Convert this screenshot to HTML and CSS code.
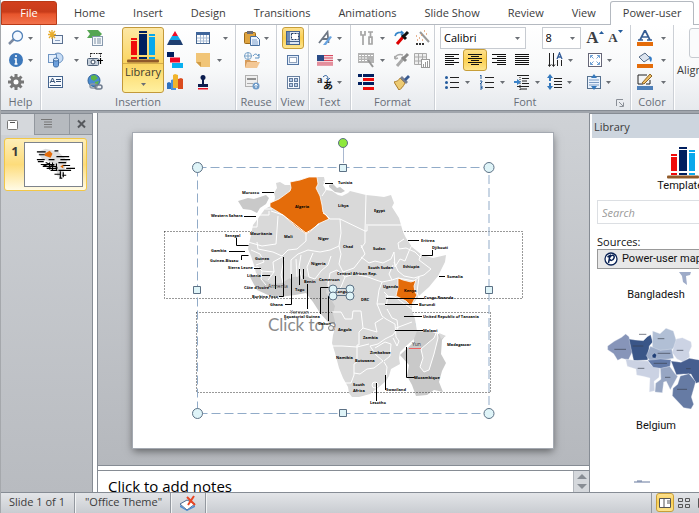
FILE: index.html
```html
<!DOCTYPE html>
<html lang="en">
<head>
<meta charset="utf-8">
<title>Presentation editor</title>
<link rel="stylesheet" href="styles.css">
</head>
<body>
<svg class="defs" aria-hidden="true">
  <symbol id="caret" viewBox="0 0 5 3"><path d="M0 0h5L2.500 3z" fill="#6b6f75"/></symbol>
  <symbol id="search" viewBox="0 0 16 16"><path d="M6 9L1 14" stroke="#7c8aa0" stroke-width="2.500"/><circle cx="9.500" cy="6" r="5" fill="#f4f9ff" stroke="#5382b8" stroke-width="1.300"/></symbol>
  <symbol id="info" viewBox="0 0 16 16"><circle cx="8" cy="8" r="7" fill="#3d78bb"/><path d="M8 3v2M6.500 7H8v4.500M6.500 12h3" stroke="#fff" stroke-width="1.600" fill="none"/></symbol>
  <symbol id="gear" viewBox="0 0 16 16"><g stroke="#777" stroke-width="3"><path d="M8 0v16M0 8h16M2.500 2.500l11 11M13.500 2.500l-11 11"/></g><circle cx="8" cy="8" r="5.500" fill="#777"/><circle cx="8" cy="8" r="2.500" fill="#fff"/></symbol>
  <symbol id="newslide" viewBox="0 0 16 16"><rect x="4.500" y="5.500" width="10" height="8" fill="#eef4fc" stroke="#5b7090"/><path d="M7 10.500h5" stroke="#8aa0c0"/><path d="M4 0v9M0 4.500h8M1 1l6 7M7 1L1 8" stroke="#e8ad2c" stroke-width="1.300"/></symbol>
  <symbol id="shapes" viewBox="0 0 16 16"><circle cx="10" cy="6" r="5" fill="#c6dcf5" stroke="#6e94c2"/><rect x=".5" y="2.500" width="8" height="8" fill="#e4effc" stroke="#6e94c2"/><path d="M5.500 7.500v6c0 2 5 2 5 0v-6z" fill="#6da0dc" stroke="#3f6ea6"/><ellipse cx="8" cy="7.500" rx="2.500" ry="1.500" fill="#d7e8fa" stroke="#3f6ea6"/></symbol>
  <symbol id="textbox" viewBox="0 0 16 16"><rect x=".5" y="2.500" width="14" height="11" fill="#f8fbff" stroke="#45658f"/><path d="M2 9l2.500-5L7 9M3 7.500h3M8 5.500h5M8 7.500h5M2 11.500h11" stroke="#355277" fill="none"/></symbol>
  <symbol id="flow" viewBox="0 0 16 16"><path d="M0 0h11l4 4-4 4H0l3-4z" fill="#55a552"/><rect x="5.500" y="6.500" width="10" height="9" fill="#f6f9fc" stroke="#8799ad"/><path d="M7 9h2m1 0h4M7 11h2m1 0h4M7 13h2m1 0h4" stroke="#7d8fa3"/></symbol>
  <symbol id="shot" viewBox="0 0 16 16"><path d="M4 1.500h11M3.500 1v5M13.500 1v6" stroke="#222" stroke-dasharray="1.500 1" fill="none"/><rect x=".5" y="6.500" width="11" height="7" rx="1" fill="#c5cfdb" stroke="#4e6077"/><circle cx="6" cy="10" r="2" fill="#fff" stroke="#35465c"/><path d="M10 8.500h6M13.500 6v6" stroke="#000" stroke-width="1.200"/></symbol>
  <symbol id="globe" viewBox="0 0 16 16"><circle cx="7" cy="6.500" r="6" fill="#498bd0" stroke="#2f6297"/><path d="M4 2l4-1 3 3-4 3-3-2zM8 8l4-1-2 5-2-1z" fill="#5cb645"/><rect x="3" y="10" width="7" height="4" rx="2" fill="none" stroke="#8b97a6" stroke-width="1.500"/><rect x="8" y="11" width="7" height="4" rx="2" fill="none" stroke="#6e7b8d" stroke-width="1.500"/></symbol>
  <symbol id="books" viewBox="0 0 34 34"><g fill="#f00c0c"><rect x="5" y="9" width="6" height="2"/><rect x="5" y="12" width="6" height="14"/><rect x="5" y="28" width="6" height="2"/></g><g fill="#001f5f"><rect x="13" y="2" width="8" height="2"/><rect x="13" y="5" width="8" height="21"/><rect x="13" y="28" width="8" height="2"/></g><g fill="#08a8ec"><rect x="23" y="5" width="6" height="2"/><rect x="23" y="8" width="6" height="18"/><rect x="23" y="28" width="6" height="2"/></g><rect x="1" y="30.500" width="32" height="3" rx="1" fill="#915a29"/></symbol>
  <symbol id="pyramid" viewBox="0 0 16 16"><path d="M8 1l3 5H5z" fill="#f00c28"/><path d="M5 6h6l2.500 4h-11z" fill="#14a6e8"/><path d="M2.500 10h11l2.500 5H0z" fill="#1e3e70"/></symbol>
  <symbol id="gantt" viewBox="0 0 16 16"><path d="M0 0h7v5H0z" fill="#001f5f"/><path d="M3 5.500h10v5H3z" fill="#f00c28"/><path d="M5 11h11v5H5z" fill="#08b0f0"/></symbol>
  <symbol id="charts" viewBox="0 0 16 16"><path d="M0 9l2-1 2 1v6H0z" fill="#2f71bd"/><path d="M4 6l3-1 2 1v10H4z" fill="#4b91da"/><path d="M6 1l2-1 3 1v13H6z" fill="#f0b32c"/><path d="M11 5l3-1 2 1v10h-5z" fill="#da4b1e"/></symbol>
  <symbol id="table" viewBox="0 0 16 16"><rect x="1.500" y="2.500" width="13" height="11" fill="#fff" stroke="#45658f"/><path d="M1 2h14v3H1z" fill="#40669b"/><path d="M2 8h12M2 11h12M5.500 5v8M8.500 5v8M11.500 5v8" stroke="#a9bdd6"/></symbol>
  <symbol id="note" viewBox="0 0 16 16"><path d="M1 1h14v14H6l-5-5z" fill="#f1c578"/><path d="M1 10h5v5z" fill="#cf9b46"/></symbol>
  <symbol id="stamp" viewBox="0 0 16 16"><circle cx="8" cy="3.500" r="2.500" fill="#0b1d4f"/><path d="M7 5h2v5h4v3H3v-3h4z" fill="#0b1d4f"/><path d="M3 14h10v1.500H3z" fill="#e81224"/></symbol>
  <symbol id="paste" viewBox="0 0 16 16"><rect x=".5" y="2.500" width="11" height="11" rx="1" fill="#dfa440" stroke="#9c6a1a"/><rect x="3" y="1" width="6" height="3" fill="#6c6c76"/><path d="M6.500 6.500h6l3 3v6h-9z" fill="#eef4ff" stroke="#466e9f"/><path d="M8 10h5M8 12h6M8 14h6" stroke="#7da0ca"/></symbol>
  <symbol id="folder" viewBox="0 0 16 16"><circle cx="4" cy="4" r="3.500" fill="none" stroke="#7ba3c8"/><path d="M0 4h8M4 0v8" stroke="#7ba3c8"/><path d="M9 4c2-3 4-2 5 0l1-2v4h-4" fill="none" stroke="#5b8fbf"/><path d="M1 8h5l1 1h6v6H1z" fill="#d69b5b"/><path d="M3 10h13l-3 6H1z" fill="#f3c795"/></symbol>
  <symbol id="publish" viewBox="0 0 16 16"><rect x="1.500" y="1.500" width="12" height="11" fill="#efefef" stroke="#b0b0b0"/><path d="M3 4h9v2H3z" fill="#909090"/><path d="M3 9.500h6" stroke="#aaa"/><circle cx="12" cy="12" r="3.500" fill="#6f9bc8"/><path d="M12 14v-4M10.500 11.500L12 10l1.500 1.500" stroke="#fff" fill="none"/></symbol>
  <symbol id="guide" viewBox="0 0 16 16"><rect x="1.500" y="1.500" width="13" height="13" fill="#dde7f4" stroke="#46638c"/><path d="M2 2h3v12H2z" fill="#6f8cb5"/><path d="M2 11.500h12" stroke="#46638c"/><rect x="6.500" y="3.500" width="7" height="6" fill="#fff" stroke="#223b60" stroke-dasharray="2 1"/></symbol>
  <symbol id="fitview" viewBox="0 0 16 16"><rect x="2.500" y="3.500" width="11" height="9" fill="#e2edfa" stroke="#5475a2"/><rect x="4.500" y="5.500" width="7" height="5" fill="#fff" stroke="#33517b" stroke-dasharray="1 1"/></symbol>
  <symbol id="sorter" viewBox="0 0 16 16"><rect x="2.500" y="2.500" width="12" height="12" fill="#f5f9ff" stroke="#667f9f"/><g fill="#b8cce7" stroke="#637c9d"><rect x="4.500" y="4.500" width="3" height="3"/><rect x="9.500" y="4.500" width="3" height="3"/><rect x="4.500" y="9.500" width="3" height="3"/><rect x="9.500" y="9.500" width="3" height="3"/></g></symbol>
  <symbol id="fontstyle" viewBox="0 0 16 16"><path d="M2 13L10.500 2l1 11M5 9h6" stroke="#6e7784" stroke-width="1.800" fill="none"/><path d="M6 15l7-9 2 1-6 8z" fill="#69a3df"/></symbol>
  <symbol id="flag" viewBox="0 0 16 16"><path d="M0 3h16v10H0z" fill="#f3d5da"/><path d="M0 3.500h16M0 6h16M0 8.500h16M0 11h16M0 13h16" stroke="#d64b60" stroke-width="1.200"/><path d="M0 3h7v6H0z" fill="#294b86"/></symbol>
  <symbol id="translate" viewBox="0 0 16 16"><text x="0" y="9" class="glyph-a">a</text><text x="6" y="15" class="glyph-jp">あ</text><path d="M6 3c3-3 5-1 5 2M9.500 4L11 6l2-2" stroke="#35659f" fill="none"/></symbol>
  <symbol id="tools" viewBox="0 0 16 16"><path d="M3 1v4h4V1M5 5v10M10 2h5M12.500 2v6M11 7v7h3V7z" stroke="#a5a5a5" stroke-width="1.700" fill="none"/></symbol>
  <symbol id="keyb" viewBox="0 0 16 16"><path d="M0 1h16v10H0z" fill="#b3b3b3"/><path d="M1 3.500h14M1 6h9M1 8.500h8" stroke="#fff" stroke-dasharray="2 1"/><path d="M10 8l5 7" stroke="#969696" stroke-width="2"/></symbol>
  <symbol id="rows" viewBox="0 0 16 16"><path d="M0 0h4v3H0zM5 0h11v3H5zM0 8h4v3H0zM5 8h11v3H5z" fill="#001f5f"/><path d="M5 4h11v3H5zM5 13h11v3H5z" fill="#f00c0c"/></symbol>
  <symbol id="dropper" viewBox="0 0 16 16"><path d="M3 14l6-7" stroke="#d00" stroke-width="3"/><path d="M8 5l4 4M10 6l4-4" stroke="#111" stroke-width="3"/><path d="M1 6c1-4 5-4 8-3M7 1l2 2-2 2" stroke="#3385ca" stroke-width="1.600" fill="none"/></symbol>
  <symbol id="dropper2" viewBox="0 0 16 16"><path d="M3 14l6-7" stroke="#aaa" stroke-width="3"/><path d="M8 5l4 4M10 6l4-4" stroke="#888" stroke-width="3"/><path d="M1 7c0-4 4-5 8-4M1 7L0 4m1 3l3-1" stroke="#aaa" stroke-width="1.500" fill="none"/></symbol>
  <symbol id="wand" viewBox="0 0 16 16"><path d="M6 2l9 10" stroke="#999" stroke-width="2"/><path d="M2 6h1M5 8h1M3 10h1M7 5h1M8 10h1M12 4h1M10 1h1" stroke="#df9b6c" stroke-width="1.500"/><path d="M2 14h8" stroke="#333" stroke-width="2" stroke-dasharray="2 1"/></symbol>
  <symbol id="chartgray" viewBox="0 0 16 16"><path d="M.5 1.500h12v11H.5zM1 5h12M1 9h12M4.500 2v10M8.500 2v10" fill="#eee" stroke="#aaa"/><rect x="7.500" y="7.500" width="8" height="8" fill="#fff" stroke="#999"/><path d="M9.500 15v-3M11.500 15v-5M13.500 15v-6" stroke="#999"/></symbol>
  <symbol id="brush" viewBox="0 0 16 16"><path d="M0 8c4-1 5-2 6-4l5 5c-2 4-4 6-6 7z" fill="#edcb73" stroke="#aa7c2b"/><path d="M6 4l2-2 6 6-2 2z" fill="#777f91"/><path d="M10 5l4-4 2 2-4 4z" fill="#375a91"/></symbol>
  <symbol id="left" viewBox="0 0 16 16"><path d="M1 2.500h14M1 4.500h9M1 6.500h14M1 8.500h9M1 10.500h14M1 12.500h9" stroke="#111"/></symbol>
  <symbol id="center" viewBox="0 0 16 16"><path d="M1 2.500h14M4 4.500h8M1 6.500h14M4 8.500h8M1 10.500h14M4 12.500h8" stroke="#111"/></symbol>
  <symbol id="right" viewBox="0 0 16 16"><path d="M1 2.500h14M6 4.500h9M1 6.500h14M6 8.500h9M1 10.500h14M6 12.500h9" stroke="#111"/></symbol>
  <symbol id="justify" viewBox="0 0 16 16"><path d="M1 2.500h14M1 4.500h14M1 6.500h14M1 8.500h14M1 10.500h14M1 12.500h14" stroke="#111"/></symbol>
  <symbol id="textdir" viewBox="0 0 16 16"><path d="M1.500 1v13M5.500 1v13M9.500 8v6M13.500 8v6M0 12.500l1.500 2 1.500-2M4 12.500l1.500 2 1.500-2" stroke="#222" fill="none"/><path d="M9 7l2.500-6L14 7M10 5h3" stroke="#345d99" stroke-width="1.300" fill="none"/></symbol>
  <symbol id="frame" viewBox="0 0 16 16"><rect x="1.500" y="1.500" width="13" height="13" fill="#fff" stroke="#667"/><path d="M3.500 6V3.500H6M10 3.500h2.500V6M12.500 10v2.500H10M6 12.500H3.500V10M3.500 3.500l3 3M12.500 3.500l-3 3M12.500 12.500l-3-3M3.500 12.500l3-3" stroke="#6ea0d4" fill="none"/></symbol>
  <symbol id="bullets" viewBox="0 0 16 16"><path d="M6 3.500h9M6 8.500h9M6 13.500h9" stroke="#222"/><g fill="#245c9d"><circle cx="2.500" cy="3.500" r="1.500"/><circle cx="2.500" cy="8.500" r="1.500"/><circle cx="2.500" cy="13.500" r="1.500"/></g></symbol>
  <symbol id="numbers" viewBox="0 0 16 16"><path d="M6 3.500h9M6 8.500h9M6 13.500h9" stroke="#222"/><path d="M1 2l1-1v4M1 7h2v1L1 10h2M1 12h2v3H1M1.500 13.500H3" stroke="#245c9d" fill="none"/></symbol>
  <symbol id="indent" viewBox="0 0 16 16"><path d="M3 1.500h12M8 4.500h7M8 7h5M8 9.500h7M3 12.500h12M6 15h7" stroke="#222"/><path d="M6 1v15" stroke="#222" stroke-dasharray="1 1"/><path d="M0 7h3V5l4 3-4 3V9H0z" fill="#3a82c8"/></symbol>
  <symbol id="spacing" viewBox="0 0 16 16"><path d="M7 4.500h8M7 7.500h8M7 10.500h8M7 13.500h8" stroke="#222"/><path d="M3 0l3 4H4v3H2V4H0zM3 16l3-4H4V9H2v3H0z" fill="#3478bc"/></symbol>
  <symbol id="vertical" viewBox="0 0 16 16"><rect x="1.500" y="2.500" width="13" height="12" fill="#e9f2fc" stroke="#56718f"/><path d="M3 6h10M3 8.500h10M3 11h10" stroke="#7b9bc3"/><path d="M8 0l3 4H5zM8 16l3-4H5z" fill="#3478bc"/></symbol>
  <symbol id="fontcolor" viewBox="0 0 16 16"><path d="M3 10L8 0l5 10M5 7h6M1 10h5M10 10h5" stroke="#365d94" stroke-width="1.700" fill="none"/><path d="M0 12h16v4H0z" fill="#e46c0a"/></symbol>
  <symbol id="fill" viewBox="0 0 16 16"><path d="M2 5l6-4 5 5-6 4z" fill="#dce4ef" stroke="#586d88"/><path d="M12 4c4 1 3 4 2 6-2-1-1-4-2-6" fill="#337bc5"/><path d="M0 12h16v4H0z" fill="#e46c0a"/></symbol>
  <symbol id="outline" viewBox="0 0 16 16"><path d="M1 1h9M1 1v9h5M13 6v4H9" stroke="#222" fill="none"/><path d="M5 9L13 0l2 2-8 8z" fill="#edbd64" stroke="#8d6527"/><path d="M0 12h16v4H0z" fill="#4d7fb8"/></symbol>
</svg>

<nav class="tabs">
  <button class="file">File</button>
  <a href="#home">Home</a><a href="#insert">Insert</a><a href="#design">Design</a><a href="#transitions">Transitions</a><a href="#animations">Animations</a><a href="#show">Slide Show</a><a href="#review">Review</a><a href="#view">View</a><a href="#power" class="active">Power-user</a>
</nav>

<section class="ribbon">
  <div class="group help">
    <div class="stack">
      <button class="tool" aria-label="Search"><svg class="i"><use href="#search"/></svg><svg class="c"><use href="#caret"/></svg></button>
      <button class="tool" aria-label="Info"><svg class="i"><use href="#info"/></svg><svg class="c"><use href="#caret"/></svg></button>
      <button class="tool" aria-label="Settings"><svg class="i"><use href="#gear"/></svg></button>
    </div><h2>Help</h2>
  </div>
  <div class="group insertion">
    <div class="cols">
      <div class="stack wide">
        <button class="tool" aria-label="New slide"><svg class="i"><use href="#newslide"/></svg><svg class="c"><use href="#caret"/></svg></button>
        <button class="tool" aria-label="Shapes"><svg class="i"><use href="#shapes"/></svg><svg class="c"><use href="#caret"/></svg></button>
        <button class="tool" aria-label="Text box"><svg class="i"><use href="#textbox"/></svg></button>
      </div>
      <div class="stack">
        <button class="tool" aria-label="Process"><svg class="i"><use href="#flow"/></svg></button>
        <button class="tool" aria-label="Screenshot"><svg class="i"><use href="#shot"/></svg></button>
        <button class="tool" aria-label="Hyperlink"><svg class="i"><use href="#globe"/></svg></button>
      </div>
      <button class="library"><svg class="big"><use href="#books"/></svg><span>Library</span><svg class="c"><use href="#caret"/></svg></button>
      <div class="stack">
        <button class="tool" aria-label="Pyramid"><svg class="i"><use href="#pyramid"/></svg></button>
        <button class="tool" aria-label="Gantt"><svg class="i"><use href="#gantt"/></svg></button>
        <button class="tool" aria-label="Chart"><svg class="i"><use href="#charts"/></svg></button>
      </div>
      <div class="stack last">
        <button class="tool" aria-label="Table"><svg class="i"><use href="#table"/></svg><svg class="c"><use href="#caret"/></svg></button>
        <button class="tool" aria-label="Note"><svg class="i"><use href="#note"/></svg><svg class="c"><use href="#caret"/></svg></button>
        <button class="tool" aria-label="Stamp"><svg class="i"><use href="#stamp"/></svg></button>
      </div>
    </div><h2>Insertion</h2>
  </div>
  <div class="group reuse">
    <div class="stack">
      <button class="tool" aria-label="Paste"><svg class="i"><use href="#paste"/></svg><svg class="c"><use href="#caret"/></svg></button>
      <button class="tool" aria-label="Open"><svg class="i"><use href="#folder"/></svg></button>
      <button class="tool" aria-label="Publish"><svg class="i"><use href="#publish"/></svg></button>
    </div><h2>Reuse</h2>
  </div>
  <div class="group view">
    <div class="stack">
      <button class="tool on" aria-label="Normal"><svg class="i"><use href="#guide"/></svg></button>
      <button class="tool" aria-label="Fit"><svg class="i"><use href="#fitview"/></svg></button>
      <button class="tool" aria-label="Sorter"><svg class="i"><use href="#sorter"/></svg></button>
    </div><h2>View</h2>
  </div>
  <div class="group text">
    <div class="stack">
      <button class="tool" aria-label="Font style"><svg class="i"><use href="#fontstyle"/></svg><svg class="c"><use href="#caret"/></svg></button>
      <button class="tool" aria-label="Language"><svg class="i"><use href="#flag"/></svg><svg class="c"><use href="#caret"/></svg></button>
      <button class="tool" aria-label="Translate"><svg class="i"><use href="#translate"/></svg><svg class="c"><use href="#caret"/></svg></button>
    </div><h2>Text</h2>
  </div>
  <div class="group format">
    <div class="cols">
      <div class="stack first">
        <button class="tool" aria-label="Tools"><svg class="i"><use href="#tools"/></svg><svg class="c"><use href="#caret"/></svg></button>
        <button class="tool" aria-label="Format grid"><svg class="i"><use href="#keyb"/></svg><svg class="c"><use href="#caret"/></svg></button>
        <button class="tool" aria-label="Row colors"><svg class="i"><use href="#rows"/></svg></button>
      </div>
      <div class="stack">
        <button class="tool" aria-label="Pick color"><svg class="i"><use href="#dropper"/></svg></button>
        <button class="tool" aria-label="Apply color"><svg class="i"><use href="#dropper2"/></svg></button>
        <button class="tool" aria-label="Format painter"><svg class="i"><use href="#brush"/></svg></button>
      </div>
      <div class="stack">
        <button class="tool" aria-label="Wand"><svg class="i"><use href="#wand"/></svg></button>
        <button class="tool" aria-label="Chart format"><svg class="i"><use href="#chartgray"/></svg></button>
      </div>
    </div><h2>Format</h2>
  </div>
  <div class="group font">
    <div class="line">
      <label class="pick family"><select aria-label="Font"><option>Calibri</option></select><svg class="c"><use href="#caret"/></svg></label>
      <label class="pick size"><select aria-label="Font size"><option>8</option></select><svg class="c"><use href="#caret"/></svg></label>
      <button class="grow" aria-label="Grow font">A<svg class="c up" viewBox="0 0 5 3"><path d="M0 3h5L2.500 0z" fill="#245c9d"/></svg></button>
      <button class="grow small" aria-label="Shrink font">A<svg class="c" viewBox="0 0 5 3"><path d="M0 0h5L2.500 3z" fill="#245c9d"/></svg></button>
    </div>
    <div class="line aligns">
      <button class="tool" aria-label="Left"><svg class="i"><use href="#left"/></svg></button>
      <button class="tool on" aria-label="Center"><svg class="i"><use href="#center"/></svg></button>
      <button class="tool" aria-label="Right"><svg class="i"><use href="#right"/></svg></button>
      <button class="tool" aria-label="Justify"><svg class="i"><use href="#justify"/></svg></button>
      <button class="tool pair" aria-label="Direction"><svg class="i"><use href="#textdir"/></svg><svg class="c"><use href="#caret"/></svg></button>
      <button class="tool pair" aria-label="Autofit"><svg class="i"><use href="#frame"/></svg><svg class="c"><use href="#caret"/></svg></button>
    </div>
    <div class="line lists">
      <button class="tool" aria-label="Bullets"><svg class="i"><use href="#bullets"/></svg><svg class="c"><use href="#caret"/></svg></button>
      <button class="tool" aria-label="Numbering"><svg class="i"><use href="#numbers"/></svg><svg class="c"><use href="#caret"/></svg></button>
      <button class="tool" aria-label="Indent"><svg class="i"><use href="#indent"/></svg><svg class="c"><use href="#caret"/></svg></button>
      <button class="tool pair" aria-label="Spacing"><svg class="i"><use href="#spacing"/></svg><svg class="c"><use href="#caret"/></svg></button>
      <button class="tool pair" aria-label="Vertical"><svg class="i"><use href="#vertical"/></svg><svg class="c"><use href="#caret"/></svg></button>
    </div>
    <h2>Font</h2>
    <svg class="launcher" viewBox="0 0 8 8"><path d="M.5 7V.5H7M3 3l4 4M7.500 3.500v4h-4" fill="none" stroke="#8a8f97"/></svg>
  </div>
  <div class="group color">
    <div class="stack">
      <button class="tool" aria-label="Font color"><svg class="i"><use href="#fontcolor"/></svg><svg class="c"><use href="#caret"/></svg></button>
      <button class="tool" aria-label="Fill color"><svg class="i"><use href="#fill"/></svg><svg class="c"><use href="#caret"/></svg></button>
      <button class="tool" aria-label="Outline color"><svg class="i"><use href="#outline"/></svg><svg class="c"><use href="#caret"/></svg></button>
    </div><h2>Color</h2>
  </div>
  <div class="group align">
    <button class="alignbtn"><i></i><span>Align</span></button>
  </div>
</section>

<main class="work">
  <aside class="slides">
    <div class="panetabs">
      <button class="cur" aria-label="Slides"><svg viewBox="0 0 11 10"><rect x=".5" y=".5" width="10" height="9" rx="1" fill="#fff" stroke="#777"/><path d="M3 2.500h5" stroke="#555"/></svg></button>
      <button aria-label="Outline"><svg viewBox="0 0 11 10"><path d="M0 .5h11M3 3h8M3 5.500h8M3 8h8" stroke="#777"/></svg></button>
      <button class="x" aria-label="Close"><svg viewBox="0 0 11 10"><path d="M2 1.500l7 7M9 1.500l-7 7" stroke="#55585d" stroke-width="2"/></svg></button>
    </div>
    <button class="thumb"><b>1</b>
      <svg viewBox="0 0 58 44"><path d="M13 9l8-3 13 3 9 9-5 17-5-1-2-12-14-6z" fill="#dedede"/><path d="M20 11l5-3 3 3-2 4-6-2z" fill="#e46c0a"/><g stroke="#000" stroke-width="1.200"><path d="M12 9h9M30 8h4M14 12h6M32 14h13M12 17h8M36 17h10M13 19h6M24 17h6M34 20h8M16 22h14M38 23h8M18 24h12M22 26h11M42 26h9M26 28h7M34 28h13M30 32h6M38 33h4M35 36h3M25 20v7M28 20v8M32 21v7M36 29v7M39 30v5M21 20l12 5M18 22l8 3"/></g><path d="M36 24l3-2v4z" fill="#e46c0a"/></svg>
    </button>
  </aside>
  <div class="stage">
    <div class="canvas">
      <div class="slide">
        <svg class="drawing" viewBox="133 132 420 315">
          <g fill="#c9c9c9">
            <path d="M238 200l10-3 6 1 12-4 3 3-3 6-6 4-3 5-6-3-8-1z"/>
            <path d="M250 276l7 13 11 5 12 2 15-2 11-2 7 9 7 11 9 10 6 2v-40l-35-14z"/>
            <path d="M329 184l4-1 4 4 3-1 5 4-4 2-6-1-6-5z"/>
            <path d="M412 321l4 9 16 1 13 4-3 4-1 14 5 9-4 8-3 11 4 10-9-2-7 5-11 1-4-11-5-9 2-11-9-10 14-13z"/>
          </g>
          <text x="268" y="330" class="prompt">Click to add subtitle</text>
          <g class="dotted"><path d="M164.500 230.500h358v67h-358z"/><path d="M196.500 311.500h294v80h-294z"/></g>
          <g fill="#d9d9d9">
            <path d="M276 182l4-1 5 3 5 0 2-3 8-2 10-3 7 0 7 0 1 5-2 3 3 5 6 1 6 4 4 1 6-3 2-2 8 2 8 2 10 1 8 1 7-2 3 8-2 4 7 11 4 14 3 6 6 9 10 8 11 3 13-3-1 7-7 14-9 11-9 8-4 5-4 5v6l3 8 2 12-3 8-8 7-6 6-1 6 1 6-9 5-2 7-3 5-7 6-9 7-11 3h-7l-3-4-1-6-5-9-4-10-4-15-3-10 1-8 3-10-3-11 2-8-5-8-4-5 1-11-7-3-10-1-8-3-12 3-8 5-10 1-10-5-6-6-2-8-3-9-3-7 3-14 2-10 6-8 6-8 9-5 1-7-1-4 3-5z"/>
            <path d="M437 330l1 7-4 16-5 16-5 2-4-5 3-9-2-9 7-6 6-5z" stroke="#fff"/><path d="M439 332l7 3-5 3z"/>
          </g>
          <g fill="#e46c0a" stroke="#fff" stroke-width=".8">
            <path d="M290 181l10-2 9-3h8l1 7-2 4 4 8 2 9 1 7 3 3 3 4-11 5-7 7-5 3-11-8-12-11-13-8v-4l9-4 11-8 1-3z"/>
            <path d="M398 277l5 2 8 2 5-2-2 6 1 6 2 3-3 5-3 6-5-5-10-5 2-9z"/>
          </g>
          <g class="borders">
            <path d="M265 208h7M249 226h8l1-12h11v-4M271 210l12 4 23 18v8l-9 8-9 1-6 6-9-4-15-3-1-7M278 215l-2 28-14 2-14-4M323 212l3 2 4 4h10l25 12 1-36M324 180l2 9-4 6M368 224h33M365 230l2 0v-7M306 232l5-3 8-6M340 218l1 14-2 13-9 4-10 2-12-2-10 4-7 6v19M361 247l4-5v-12M339 245l2 8-2 10 4 8 11-4 7-9 4-5-4-9M361 256l8 6 6-2 8 2 8-4 3-7 1 15 5-8 5 2 4-10 4-8M404 238l-6 4 1 6 7-1 9 4 6 6M421 253l-2 6 12 9-7 6-10 3-10-2-6-5-4-9M393 264l-4 9 3 6 6-2 16 3 5-4-2 15 2 6M392 279l-10 2-3 8-2 14 5 12 4 3M382 281l-6-2-8-3-14-3-9 3-4 10-7 8-6 5M345 276l-8-7-7 3-2 12 7 10M313 252l-6 14 2 10 6 2 6-8 7-6 3-9M301 254l-2 12 3 12M296 258l1 18M284 258l-3 16 2 8M282 256l-9 5 1 10-6 8M274 271l-12-1-4-4-9 2M262 270l-1 8 5 6M251 249l9 4 4 8-8 3M332 311h9l4 7h7l1-8h8l2 17-4 4v13M330 345h12l15 1 12-3M359 344h-2v17l-3 2v11l-3 8h-6l-4-2M354 372l6 1 7-5 7-1 9-7-7-6-6-9 8-2 7-5 8-4 5-7-1-8-5-2-5-9M363 327l14 4-2-9 8-5M375 347l10-6 6 2-1 12-6 5M384 361l3 5-1 10M386 318l9 5 1 13 3 4-2 5-4-8M396 327l16-6M385 295l10 1 18 13M385 303l-8 0"/>
            <circle cx="375" cy="384" r="3"/><path d="M384 291l4 4-2 10"/>
          </g>
          <g class="leaders"><path d="M262 191.500h12M325 182.500h8M244 215.500h12M236.500 237v7.500h12M229 250.500h16M241.500 259v-4.500h7M254 267.500h7M262 274.500h8M275.500 288v-13M279 295.500h4.500V256M285 303.500h6.500V273M299.500 284v-16M303.500 278v-10M307.500 308v-25M320.500 313v-26.500h8M328.500 320v-25M408 239.500h11M422 254.500h10.500V249M439 275.500h6M386 297.500h38M385 303.500h33M404 315.500h18M395 329.500h28M406.500 346v30.500h8M385.500 374v15M376.500 382v18"/></g>
          <g class="labels">
            <text x="242" y="193">Morocco</text><text x="295" y="207">Algeria</text><text x="338" y="183">Tunisia</text><text x="338" y="206">Libya</text><text x="374" y="211">Egypt</text><text x="211" y="216">Western Sahara</text><text x="250" y="234">Mauritania</text><text x="284" y="237">Mali</text><text x="318" y="239">Niger</text><text x="343" y="247">Chad</text><text x="373" y="249">Sudan</text><text x="225" y="236">Senegal</text><text x="211" y="251">Gambia</text><text x="210" y="261">Guinea-Bissau</text><text x="255" y="259">Guinea</text><text x="228" y="268">Sierra Leone</text><text x="247" y="276">Liberia</text><text x="244" y="288">Côte d'Ivoire</text><text x="252" y="297">Burkina Faso</text><text x="270" y="305">Ghana</text><text x="295" y="290">Togo</text><text x="304" y="282">Benin</text><text x="319" y="280">Cameroon</text><text x="311" y="264">Nigeria</text><text x="284" y="317">Equatorial Guinea</text><text x="318" y="324">Gabon</text><text x="335" y="292">Congo</text><text x="337" y="274">Central African Rep.</text><text x="368" y="268">South Sudan</text><text x="403" y="267">Ethiopia</text><text x="421" y="241">Eritrea</text><text x="432" y="248">Djibouti</text><text x="447" y="277">Somalia</text><text x="383" y="287">Uganda</text><text x="404" y="291">Kenya</text><text x="424" y="298">Congo Rwanda</text><text x="419" y="305">Burundi</text><text x="423" y="317">United Republic of Tanzania</text><text x="361" y="300">DRC</text><text x="423" y="331">Malawi</text><text x="447" y="345">Madagascar</text><text x="338" y="330">Angola</text><text x="363" y="338">Zambia</text><text x="370" y="353">Zimbabwe</text><text x="336" y="358">Namibia</text><text x="355" y="361">Botswana</text><text x="414" y="378">Mozambique</text><text x="386" y="390">Swaziland</text><text x="353" y="385">South</text><text x="353" y="391">Africa</text><text x="370" y="403">Lesotho</text>
          </g>
          <g class="under"><text x="268" y="287">Armenia</text><text x="290" y="313">Yerevan</text><text x="412" y="345">Yun</text></g>
          <path d="M409 347l1 1 1-1 1 1 1-1 1 1 1-1 1 1 1-1 1 1 1-1 1 1 1-1" fill="none" stroke="#f33" stroke-width=".7"/>
          <path class="box" d="M197.500 166.500h291.500v246H197.500z"/>
          <path d="M343.500 147v15" stroke="#a9b8d0"/>
          <g class="handles">
            <circle cx="343" cy="142" r="4.500" class="turn"/>
            <circle cx="197.500" cy="166.500" r="5"/><circle cx="489" cy="166.500" r="5"/><circle cx="197.500" cy="412.500" r="5"/><circle cx="489" cy="412.500" r="5"/>
            <path d="M339.500 163.500h7v7h-7zM339.500 408.500h7v7h-7zM193.500 285.500h7v7h-7zM485.500 285.500h7v7h-7z"/>
            <path d="M333 287.500h17M333 294.500h17"/><circle cx="333" cy="288" r="4"/><circle cx="333" cy="295" r="4"/><circle cx="350" cy="288" r="4"/><circle cx="350" cy="295" r="4"/>
            <circle cx="331" cy="327" r="2.500" class="tiny"/>
          </g>
        </svg>
      </div>
    </div>
    <div class="notes"><p>Click to add notes</p>
      <div class="scroll"><svg viewBox="0 0 10 5"><path d="M5 0l5 5H0z" fill="#888d94"/></svg><svg viewBox="0 0 10 5"><path d="M0 0h10L5 5z" fill="#888d94"/></svg></div>
    </div>
  </div>
  <aside class="librarypane">
    <h3>Library</h3>
    <button class="templates"><svg class="big"><use href="#books"/></svg>Templates</button>
    <input class="find" type="text" placeholder="Search" aria-label="Search library">
    <div class="sources">Sources:</div>
    <button class="source"><svg viewBox="0 0 14 14"><circle cx="7" cy="7" r="6" fill="#fff" stroke="#0b2355" stroke-width="1.300"/><path d="M3.500 5l2.500-1.500L4.500 11M6 5c2-3 5-2 4 1s-4 3-4 1" fill="none" stroke="#0b2355" stroke-width="1.500"/></svg>Power-user maps</button>
    <div class="gallery">
      <svg class="tail" viewBox="0 0 128 16"><path d="M87 1h12l-1 3-4 1 1 9-4-3-1-6z" fill="#9eabc8"/></svg>
      <span>Bangladesh</span>
      <svg class="belgium" viewBox="75 135 300 255" stroke="#eef1f7" stroke-width="1">
        <path d="M80 195l20-14 22-12 12-10 10 8 10 45-12 25-20-5-12 6-12-20-18-12z" fill="#8795b9"/>
        <path d="M144 174l18 3 25 2 12-12 10-6 6 22-10 12-5 42-42 2z" fill="#3a5688"/>
        <path d="M215 150l22 8 18-16 22 8 8 26 5 14-18 16-28 4-30-5z" fill="#b1bfd5"/>
        <path d="M286 174l18-4 26 12 2 14-8 18 2 14-20 14-18-8-15-20z" fill="#ccd3e4"/>
        <path d="M208 196l30 12 34-4 6 28-42 6-28 4-12-18z" fill="#9babc8"/>
        <path d="M134 234l36 6 30 0 12 14 24 5-2 30-15 12 2 28-16 4 2-42-20-5-20-4-2-18-26-8z" fill="#cbd2e3"/>
        <path d="M238 260l28-4 16 22 8 8-22 40-12-25-8 2-4 32-22-2 2-26 16-12z" fill="#97a6c3"/>
        <path d="M200 238l38-4 32 2-3 20-28 6-22-3z" fill="#637aa8"/><path d="M213 222l8-6 6 6-3 10-10-2z" fill="#203f78"/>
        <path d="M270 240l30 4 25-12 50 8v55l-30 12-15-28-22 0-22 2z" fill="#465e8f"/>
        <path d="M298 285l26-7 20 24-5 18-8 28 7 22-8 14-22-4-34-36 2-22 14-12z" fill="#667ba4"/>
        <path d="M100 205h35M155 195h32M230 173h20M230 217h38M287 208h20M170 262h20M218 247h40M252 289h16M315 263h14M288 325h30M174 160h22" stroke="#3b414f" stroke-width="2"/>
      </svg>
      <span>Belgium</span>
      <svg class="next" viewBox="0 0 100 4"><path d="M28 3h16M31 2h5" stroke="#66799d"/></svg>
    </div>
  </aside>
</main>

<footer class="status">
  <span>Slide 1 of 1</span><span class="theme">"Office Theme"</span>
  <span class="proof"><svg viewBox="0 0 18 16"><path d="M1 9l7-4 8 4-8 6z" fill="#fff" stroke="#4e6b93"/><path d="M1 10l7 5 8-5v2l-8 4-7-4z" fill="#4d8ad1"/><path d="M8 2l8 8M15 1l-6 9" stroke="#e94624" stroke-width="2"/></svg></span>
  <div class="views">
    <button class="on" aria-label="Normal view"><svg viewBox="0 0 12 10"><path d="M.5 .5h11v9H.5zM5 1v8M8 3h3M8 5h3" fill="#fff" stroke="#555"/></svg></button>
    <button aria-label="Slide sorter"><svg viewBox="0 0 12 10"><path d="M.5 .5h4v3h-4zM7.500 .5h4v3h-4zM.5 6.500h4v3h-4zM7.500 6.500h4v3h-4z" fill="none" stroke="#555"/></svg></button>
    <button aria-label="Reading view"><svg viewBox="0 0 12 10"><path d="M.5 .5h11v9H.5z" fill="#fff" stroke="#555"/></svg></button>
  </div>
</footer>
</body>
</html>
```

FILE: styles.css
```css
* { box-sizing: border-box; }
body {
  margin: 0; height: 100vh; overflow: hidden;
  display: flex; flex-direction: column;
  border-left: 1px solid #a5a8ac;
  background: #fff; color: #3b3b3b;
  font: 11px/16px "Open Sans", "Noto Sans", sans-serif;
}
button { font: inherit; color: inherit; border: 0; padding: 0; background: none; }
h2, h3, p { margin: 0; font: inherit; }
.defs { display: none; }
svg { display: block; flex: none; }
.glyph-a { font: bold 11px "Liberation Serif", serif; fill: #333; }
.glyph-jp { font: bold 10px "Noto Sans CJK JP", sans-serif; fill: #111; }

.tabs { display: flex; flex: none; height: 25px; padding-top: 1px; border-bottom: 1px solid #b4b9c0; white-space: nowrap; }
.tabs a { color: inherit; text-decoration: none; padding: 4px 14px; height: 24px; }
.tabs .file { width: 56px; margin-right: 3px; height: 24px; color: #fff; border: 1px solid #b93a17; border-radius: 3px 3px 0 0; background: linear-gradient(#d2401d, #c83c1a 45%, #e8552c 55%, #f2724c); }
.tabs .active { background: #fff; border: 1px solid #b4b9c0; border-bottom: 0; border-radius: 3px 3px 0 0; padding: 3px 12px; height: 24px; }

.ribbon { display: flex; flex: none; height: 86px; overflow: hidden; border-bottom: 1px solid #868c94; background: linear-gradient(#fff, #f8f9fa 50%, #e6e9ed); }
.group { position: relative; flex: none; display: flex; flex-direction: column; padding: 2px 0 0 7px; border-right: 1px solid #ccd0d6; box-shadow: 1px 0 #fff; }
.group h2 { margin: 1px 0 0 -7px; text-align: center; color: #686e78; }
.help { width: 40px; }
.insertion { width: 195px; }
.reuse { width: 41px; }
.view { width: 32px; }
.text { width: 42px; }
.format { width: 84px; }
.font { width: 196px; }
.color { width: 43px; }
.align { width: 60px; border: 0; }
.cols { display: flex; }
.stack { display: flex; flex-direction: column; height: 66px; }
.tool { display: flex; align-items: center; height: 22px; gap: 4px; }
.i { width: 16px; height: 16px; }
.c { width: 5px; height: 3px; }
.wide .tool { gap: 10px; }
.wide { width: 39px; }
.on { border: 1px solid #c79e38; border-radius: 3px; background: linear-gradient(#fde08d, #fbd052 50%, #fde58f); }
.view .stack { padding-left: 1px; }
.view .on { width: 22px; padding-left: 2px; margin-left: -3px; }
.library { display: flex; flex-direction: column; align-items: center; width: 42px; height: 66px; margin: 0 3px 0 19px; border: 1px solid #c2993a; border-radius: 3px; color: #403c30; background: linear-gradient(#fde7a4, #fbd561 55%, #fff0a0); }
.library .big { width: 34px; height: 34px; margin-top: 1px; }
.library span { width: 100%; line-height: 16px; border-top: 1px solid #d2ab4c; }
.library .c { margin-top: 3px; }
.insertion .last { margin-left: 12px; }
.last .tool { gap: 6px; }
.last .tool:first-child { gap: 12px; }
.reuse .stack, .text .stack { padding-left: 1px; }
.format .first { width: 40px; }
.format .stack + .stack { width: 22px; }
.format .first .tool { gap: 6px; }
.line { display: flex; height: 22px; align-items: center; }
.font { padding-left: 5px; }
.font h2 { margin-left: -20px; }
.pick { display: flex; align-items: center; height: 22px; border: 1px solid #c7cbd1; background: #fff; padding-right: 5px; }
.pick select { appearance: none; border: 0; padding: 0 3px; flex: 1; min-width: 0; background: none; color: #000; font: inherit; }
.family { width: 86px; }
.size { width: 40px; margin: 0 5px 0 16px; }
.grow { display: flex; align-items: flex-start; width: 22px; color: #3b3f45; font: bold 17px/20px "Liberation Serif", serif; }
.grow .c { margin-top: 3px; }
.grow.small { font-size: 13px; line-height: 22px; }
.aligns .tool, .lists .tool { padding-left: 4px; width: 23px; }
.aligns .on { width: 24px; padding-left: 3px; }
.aligns .pair { margin-left: 11px; width: 28px; gap: 4px; }
.lists .tool { width: 35px; gap: 5px; }
.lists .pair { width: 39px; gap: 4px; padding-left: 2px; }
.launcher { position: absolute; right: 6px; bottom: 3px; width: 8px; height: 8px; }
.color .tool { gap: 8px; }
.color .stack { margin-left: -1px; }
.alignbtn { display: flex; flex-direction: column; text-align: left; width: 50px; margin: 1px 0 0 -4px; }
.alignbtn i { width: 30px; height: 30px; margin: 0 0 4px 12px; border: 1px solid #c7cbd1; border-radius: 3px; background: #fafbfc; }

.work { flex: 1; min-height: 0; display: flex; border-top: 2px solid #a0a5ac; }
.slides { flex: none; width: 92px; border-right: 1px solid #868c94; border-top: 1px solid #868c94; background: linear-gradient(#cfd2d6, #b8bbc0); }
.panetabs { display: flex; height: 21px; }
.panetabs button { flex: 35; display: flex; align-items: center; padding-left: 6px; border: solid #92979e; border-width: 0 1px 1px 0; background: #b6babf; }
.panetabs .cur { border-bottom: 0; background: #d5d8dc; }
.panetabs .x { flex: 21; border-right: 0; }
.panetabs svg { width: 11px; height: 10px; }
.thumb { display: flex; align-items: flex-start; width: 83px; height: 53px; margin: 3px 0 0 3px; padding: 3px 0 0 6px; gap: 5px; border: 1px solid #f2c747; border-radius: 3px; background: linear-gradient(#fdeeb8, #fddc7b 50%, #fffbe6); }
.thumb b { font-size: 13px; line-height: 18px; width: 8px; }
.thumb svg { width: 59px; height: 45px; border: 1px solid #7d838c; background: #fff; }
.stage { flex: 1; min-width: 0; display: flex; flex-direction: column; margin-left: 4px; border-left: 1px solid #868c94; }
.canvas { flex: 1; min-height: 0; display: flex; align-items: center; padding: 2px 36px 0 35px; background: linear-gradient(#cfd2d6, #b5b8bd); border-bottom: 1px solid #868c94; }
.slide { flex: 1; background: #fff; box-shadow: 0 0 0 1px #a4a9b1, 0 3px 8px rgba(0, 0, 0, .5); }
.drawing { width: 100%; height: auto; }
.prompt { font: 17px Lato, "Open Sans", sans-serif; fill: #8b8b8b; }
.dotted path { fill: none; stroke: #333; stroke-dasharray: 1 2; }
.borders { fill: none; stroke: #fff; stroke-width: 1; stroke-linejoin: round; }
.leaders { fill: none; stroke: #000; }
.labels { font: bold 4px "Open Sans", sans-serif; fill: #000; }
.under { font: 5px "Open Sans", sans-serif; fill: #333; }
.box { fill: none; stroke: #91abc8; stroke-dasharray: 9 4; }
.handles { fill: #dff4f8; stroke: #5c7185; }
.handles .turn { fill: #8ee83c; }
.handles .tiny { fill: #eee; stroke: #888; }
.notes { flex: none; display: flex; height: 22px; margin-top: 4px; overflow: hidden; border-top: 1px solid #868c94; background: #fff; color: #000; }
.notes p { flex: 1; padding: 4px 10px; font-size: 15px; line-height: 22px; }
.scroll { width: 16px; display: flex; flex-direction: column; align-items: center; gap: 5px; padding-top: 3px; border-left: 1px solid #b3b7bd; background: #d5d8dc; }
.scroll svg { width: 10px; height: 5px; }

.librarypane { flex: none; width: 110px; overflow: hidden; border: solid #868c94; border-width: 1px 0 0 1px; padding-left: 2px; background: #fff; color: #111; }
.librarypane h3 { height: 24px; padding: 5px 2px; color: #3b3b3b; background: #cdd5de; }
.templates { display: flex; flex-direction: column; align-items: center; width: 182px; margin-top: 7px; font-family: Roboto, "Open Sans", sans-serif; line-height: 14px; }
.templates .big { width: 36px; height: 34px; }
.find { display: block; width: 172px; height: 24px; margin: 7px 0 0 5px; padding: 0 4px; border: 1px solid #dcdfe3; font: inherit; }
.find::placeholder { color: #9a9a9a; font-style: italic; opacity: 1; }
.sources { margin: 10px 0 0 5px; }
.source { display: flex; align-items: center; gap: 4px; width: 172px; height: 20px; margin: -1px 0 0 5px; padding-left: 6px; border: 1px solid #999; background: #e8e8e8; font-family: Roboto, "Open Sans", sans-serif; }
.source svg { width: 14px; height: 14px; }
.gallery { display: flex; flex-direction: column; align-items: center; width: 128px; font-family: Roboto, "Open Sans", sans-serif; }
.tail { width: 128px; height: 16px; margin: 2px 0 0; }
.belgium { width: 100px; height: 85px; margin: 23px 0 7px; }
.gallery span { flex: none; }
.next { width: 100px; height: 4px; margin-top: 45px; }

.status { flex: none; display: flex; height: 21px; border-top: 1px solid #868c94; background: linear-gradient(#e3e5e8, #c9ccd1); }
.status span { padding: 1px 9px 0 8px; border-right: 1px solid #93989f; box-shadow: 1px 0 #f2f3f4; }
.status .theme { padding: 1px 8px 0 10px; }
.status .proof { padding: 2px 8px; }
.proof svg { width: 18px; height: 16px; }
.views { display: flex; margin-left: auto; border-left: 1px solid #93989f; padding-left: 4px; width: 48px; gap: 2px; overflow: hidden; }
.views button { flex: none; width: 18px; height: 19px; padding-left: 2px; }
.views svg { width: 12px; height: 10px; }
```
